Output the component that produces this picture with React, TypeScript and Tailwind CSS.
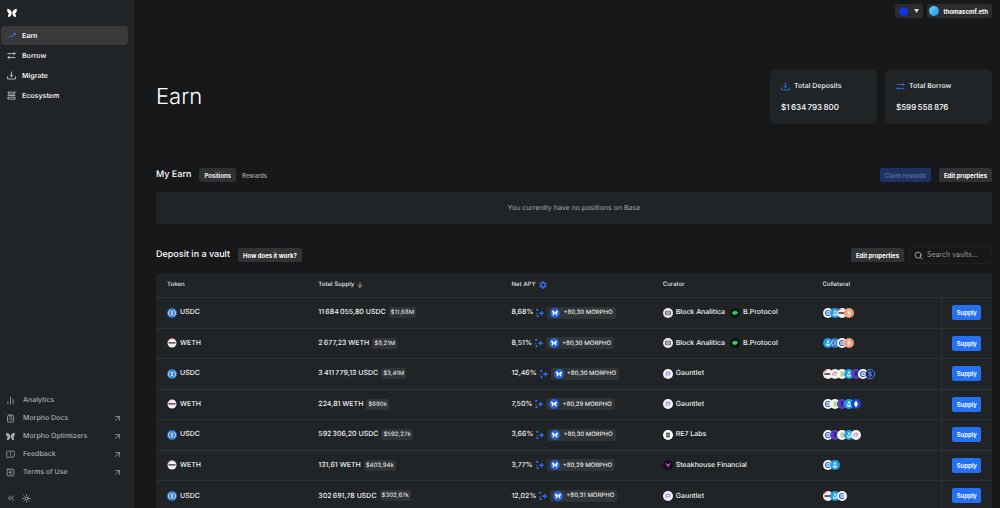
import React from "react";
import {
  ArrowDown,
  ArrowUpRight,
  ChartNoAxesColumn,
  ChevronsLeft,
  ClipboardList,
  MessageSquareWarning,
  Search,
  SquareChartGantt,
  Sun,
} from "lucide-react";

// ============================================================================
// Data
// ============================================================================

type Coin = "cb" | "lido" | "weth" | "btc" | "usdc" | "lime" | "purple" | "pink" | "eth" | "navy";

interface Vault {
  token: "USDC" | "WETH";
  supply: string;
  usd: string;
  apy: string;
  reward: string;
  curators: Curator[];
  collateral: Coin[];
}

type Curator = "Block Analitica" | "B.Protocol" | "Gauntlet" | "RE7 Labs" | "Steakhouse Financial";

const VAULTS: Vault[] = [
  { token: "USDC", supply: "11\u2009684\u2009055,80", usd: "$11,68M", apy: "8,68%", reward: "+80,30", curators: ["Block Analitica", "B.Protocol"], collateral: ["cb", "lido", "weth", "btc"] },
  { token: "WETH", supply: "2\u2009677,23", usd: "$8,21M", apy: "8,51%", reward: "+80,30", curators: ["Block Analitica", "B.Protocol"], collateral: ["lido", "usdc", "cb", "btc"] },
  { token: "USDC", supply: "3\u2009411\u2009779,13", usd: "$3,41M", apy: "12,46%", reward: "+80,30", curators: ["Gauntlet"], collateral: ["weth", "pink", "lime", "lido", "purple", "cb", "navy"] },
  { token: "WETH", supply: "224,81", usd: "$690k", apy: "7,50%", reward: "+80,29", curators: ["Gauntlet"], collateral: ["cb", "lime", "purple", "lido", "eth"] },
  { token: "USDC", supply: "592\u2009306,20", usd: "$592,27k", apy: "3,66%", reward: "+80,30", curators: ["RE7 Labs"], collateral: ["cb", "purple", "lime", "lido", "pink"] },
  { token: "WETH", supply: "131,61", usd: "$403,94k", apy: "3,77%", reward: "+80,29", curators: ["Steakhouse Financial"], collateral: ["cb", "lido"] },
  { token: "USDC", supply: "302\u2009691,78", usd: "$302,67k", apy: "12,02%", reward: "+80,31", curators: ["Gauntlet"], collateral: ["weth", "lido", "cb"] },
];

// ============================================================================
// Icons
// ============================================================================

function Butterfly({ className }: { className?: string }) {
  return (
    <svg viewBox="0 0 20 20" className={className} fill="currentColor" aria-hidden="true">
      <path d="M1 1.500c3.600.2 6.800 2.700 8.300 6.300V12c-1.300 3.600-3.700 6-5.800 6-1.700 0-1.700-2.100-1.300-3.500.4-1.500 1.200-2.400 2.400-2.900C2.100 10.600.7 8 .5 5 .4 3.300.2 1.500 1 1.500Z" />
      <path d="M19 1.500c-3.600.2-6.800 2.700-8.300 6.300V12c1.300 3.600 3.700 6 5.800 6 1.700 0 1.700-2.100 1.300-3.500-.4-1.500-1.200-2.400-2.400-2.900 2.500-1 3.900-3.600 4.100-6.600.1-1.700.3-3.500-.5-3.500Z" />
    </svg>
  );
}

function TrendIcon({ className }: { className?: string }) {
  return (
    <svg viewBox="0 0 16 16" className={className} fill="none" stroke="currentColor" strokeWidth="1.600" aria-hidden="true">
      <path d="m1 12.500 4.500-4.500 3 2.500L14.500 4M10.500 4h4v4" />
    </svg>
  );
}

function SwapIcon({ className }: { className?: string }) {
  return (
    <svg viewBox="0 0 16 16" className={className} fill="none" stroke="currentColor" strokeWidth="1.600" aria-hidden="true">
      <path d="M1 4.500h13.500M11.500 1.500l3 3-3 3M15 11.500H1.500M4.500 8.500l-3 3 3 3" />
    </svg>
  );
}

function TrayIcon({ className }: { className?: string }) {
  return (
    <svg viewBox="0 0 16 16" className={className} fill="none" stroke="currentColor" strokeWidth="1.600" aria-hidden="true">
      <path d="M8 1v9M4.800 7 8 10.200 11.200 7M1 9.500v4.700h14V9.500" />
    </svg>
  );
}

function LayersIcon({ className }: { className?: string }) {
  return (
    <svg viewBox="0 0 16 16" className={className} fill="none" stroke="currentColor" strokeWidth="1.400" aria-hidden="true">
      <path d="M1 2h14M2.500 2v3.500h11V2M1 8h14M1.700 11h12.600v3.500H1.700z" />
    </svg>
  );
}

function HexGear({ className }: { className?: string }) {
  return (
    <svg viewBox="0 0 16 16" className={className} fill="none" stroke="currentColor" aria-hidden="true">
      <circle cx="8" cy="8" r="4.300" strokeWidth="3" />
      <path strokeWidth="3.600" d="M8 .3v3M8 12.700v3M1.400 4.200l2.200 1.200M12.400 10.600l2.200 1.200M1.400 11.800l2.200-1.200M12.400 5.400l2.200-1.200" />
    </svg>
  );
}

function Sparkles({ className }: { className?: string }) {
  return (
    <svg viewBox="0 0 16 16" className={className} fill="currentColor" aria-hidden="true">
      <path d="M10.500 3.500 11.900 6.800 15.800 8.200 11.900 9.600 10.500 13.200 9.100 9.600 5.400 8.200 9.100 6.800Z" />
      <circle cx="3.500" cy="3" r="1.800" />
      <circle cx="2.800" cy="9" r="1" />
      <circle cx="4" cy="13" r="1.800" />
    </svg>
  );
}

function TokenIcon({ token }: { token: Vault["token"] }) {
  if (token === "USDC") {
    return (
      <svg viewBox="0 0 20 20" className="size-[10px] shrink-0" fill="none" aria-hidden="true">
        <circle cx="10" cy="10" r="10" fill="#2f78c8" />
        <path d="M7 4a6.500 6.500 0 0 0 0 12M13 4a6.500 6.500 0 0 1 0 12" stroke="#fff" strokeWidth="1.500" />
        <path d="M12 8c-.4-2-4-2-4 0 0 2.300 4 1.500 4 4 0 2-3.800 2-4 0M10 5v10" stroke="#fff" strokeWidth="1.300" />
      </svg>
    );
  }
  return (
    <svg viewBox="0 0 20 20" className="size-[10px] shrink-0" aria-hidden="true">
      <circle cx="10" cy="10" r="9" fill="#f3eef0" />
      <path d="M3 8.500h14v2.500H3z" fill="#3b2b33" />
      <path d="M1 7A10 10 0 0 1 8 .5v1.200A9 9 0 0 0 2.500 7Z" fill="#d6336c" />
    </svg>
  );
}

const COINS: Record<Coin, React.ReactNode> = {
  cb: (
    <>
      <circle cx="10" cy="10" r="10" fill="#f2f6ff" />
      <path d="M13.500 6.500a5 5 0 1 0 0 7M7 10h6" fill="none" stroke="#2a59b8" strokeWidth="2.200" />
    </>
  ),
  lido: (
    <>
      <circle cx="10" cy="10" r="10" fill="#1f9fe3" />
      <path d="M10 3.500 13 8l-3 2-3-2ZM6 9.800l4 2.500 4-2.500c1.500 3.500-1 6.200-4 6.200s-5.500-2.700-4-6.200Z" fill="#c9ecfc" />
    </>
  ),
  weth: (
    <>
      <circle cx="10" cy="10" r="10" fill="#f3eef0" />
      <path d="M3 8.500h14v3H3z" fill="#3b2b33" />
      <path d="M1 6A10 10 0 0 1 8 .2v2A8 8 0 0 0 3 6Z" fill="#d6336c" />
    </>
  ),
  btc: (
    <>
      <circle cx="10" cy="10" r="10" fill="#f09a78" />
      <path d="M8 5v10M8 5.500h2.500a2.200 2.200 0 0 1 0 4.400H8h3a2.400 2.400 0 0 1 0 4.800H8" fill="none" stroke="#fff1ea" strokeWidth="1.600" />
    </>
  ),
  usdc: (
    <>
      <circle cx="10" cy="10" r="10" fill="#2f78c8" />
      <path d="M7 4a6.500 6.500 0 0 0 0 12M13 4a6.500 6.500 0 0 1 0 12M10 6v8" fill="none" stroke="#fff" strokeWidth="1.500" />
    </>
  ),
  lime: (
    <>
      <circle cx="10" cy="10" r="10" fill="#f4f8ec" />
      <path d="M7 5h3v10H7z" fill="#b9d86a" />
      <path d="M11 5h2v10h-2z" fill="#5fb8a8" />
    </>
  ),
  purple: (
    <>
      <circle cx="10" cy="10" r="10" fill="#5a3fc0" />
      <path d="M7 5.500h6M7 10h6M10 5.500V15" stroke="#2a1a78" strokeWidth="2.400" />
    </>
  ),
  pink: (
    <>
      <circle cx="10" cy="10" r="10" fill="#f5eef2" />
      <path d="M6 13V8l4-2 4 2-4 3v3" fill="none" stroke="#b48a9c" strokeWidth="2" />
    </>
  ),
  eth: (
    <>
      <circle cx="10" cy="10" r="10" fill="#1747c9" />
      <path d="m10 3 4 7-4 7-4-7Z" fill="#fff" />
    </>
  ),
  navy: (
    <>
      <circle cx="10" cy="10" r="9.200" fill="#12275c" stroke="#7fa0e6" strokeWidth="1.500" />
      <path d="M13 7c-1-2-6-1.500-6 .8 0 2.700 6 1.700 6 4.400 0 2.300-5 2.800-6 .6" fill="none" stroke="#9db8f2" strokeWidth="1.800" />
    </>
  ),
};

const CURATORS: Record<Curator, React.ReactNode> = {
  "Block Analitica": (
    <>
      <circle cx="10" cy="10" r="10" fill="#ece8e8" />
      <path d="M5 6.500h10v7H5zM5 10h10" fill="none" stroke="#4a4446" strokeWidth="1.500" />
    </>
  ),
  "B.Protocol": (
    <>
      <circle cx="10" cy="10" r="10" fill="#08140e" />
      <path d="m3 10.500 5.500-5.500 2 2L13.500 5v3H17l-5.500 6-2-1.500L6.500 15v-3.500Z" fill="#2fd06d" />
    </>
  ),
  Gauntlet: (
    <>
      <circle cx="10" cy="10" r="10" fill="#f3f1fb" />
      <path d="M6.500 15v-8.500h7v5h-4" fill="none" stroke="#8b7fd6" strokeWidth="2" />
    </>
  ),
  "RE7 Labs": (
    <>
      <circle cx="10" cy="10" r="10" fill="#fff" />
      <path d="M6 6.500h8M6 10h8M6 13.500h8" stroke="#16181a" strokeWidth="2" />
    </>
  ),
  "Steakhouse Financial": (
    <>
      <circle cx="10" cy="10" r="10" fill="#150a26" />
      <path d="m4 6.500 6 2 6-3-5.500 9.500Z" fill="#e0526a" />
      <path d="m4 6.500 6 2 .5 6.500Z" fill="#7c3fd0" />
    </>
  ),
};

// ============================================================================
// Sidebar
// ============================================================================

const NAV = [
  { label: "Earn", icon: TrendIcon },
  { label: "Borrow", icon: SwapIcon },
  { label: "Migrate", icon: TrayIcon },
  { label: "Ecosystem", icon: LayersIcon },
];

const LINKS = [
  { label: "Analytics", icon: ChartNoAxesColumn, external: false },
  { label: "Morpho Docs", icon: ClipboardList, external: true },
  { label: "Morpho Optimizers", icon: Butterfly, external: true },
  { label: "Feedback", icon: MessageSquareWarning, external: true },
  { label: "Terms of Use", icon: SquareChartGantt, external: true },
];

function Sidebar() {
  return (
    <aside className="flex w-[134px] shrink-0 flex-col bg-[#202427] pb-1">
      <a href="#" aria-label="Home" className="flex h-[26px] items-center pl-[7px]">
        <Butterfly className="size-[10px] text-white" />
      </a>
      <nav className="flex flex-col gap-px pr-1.5 pl-px">
        {NAV.map(({ label, icon: Icon }, i) => (
          <a
            key={label}
            href="#"
            className={
              i === 0
                ? "flex h-[19px] items-center gap-1.5 rounded-[4px] bg-[#39393c] pl-1.5 text-[7px] leading-3 font-semibold text-white"
                : "flex h-[19px] items-center gap-1.5 rounded-[4px] pl-1.5 text-[7px] leading-3 font-semibold text-[#eceded]"
            }
          >
            <Icon className={i === 0 ? "size-[9px] text-[#4a82e8]" : "size-[9px] text-[#c6c8c9]"} />
            {label}
          </a>
        ))}
      </nav>
      <nav className="mt-auto flex flex-col">
        {LINKS.map(({ label, icon: Icon, external }) => (
          <a key={label} href="#" className="flex h-[18px] items-center gap-2 pr-3 pl-1.5 text-[7px] font-medium text-[#a9acae]">
            <Icon className="size-[9px]" />
            {label}
            {external && <ArrowUpRight className="ml-auto size-[9px]" />}
          </a>
        ))}
      </nav>
      <div className="mt-[11px] flex h-3 items-center gap-1.5 pl-1.5 text-[#b9bbbc]">
        <button type="button" aria-label="Collapse sidebar">
          <ChevronsLeft className="size-[10px]" />
        </button>
        <button type="button" aria-label="Toggle theme">
          <Sun className="size-[9px]" />
        </button>
      </div>
    </aside>
  );
}

// ============================================================================
// Main content
// ============================================================================

function StatCard({ icon, label, value }: { icon: React.ReactNode; label: string; value: string }) {
  return (
    <div className="flex h-[55px] w-[107px] flex-col justify-center gap-[9px] rounded-[6px] bg-[#202427] px-[11px]">
      <div className="flex items-center gap-1 text-[7px] leading-3 font-medium text-[#f1f2f2]">
        {icon}
        {label}
      </div>
      <div className="text-[8px] leading-3 font-medium text-white">{value}</div>
    </div>
  );
}

function SmallButton({ children }: { children: React.ReactNode }) {
  return (
    <button type="button" className="h-[14px] rounded-[2px] bg-[#313335] px-[5px] text-[6px] font-bold text-white">
      {children}
    </button>
  );
}

function VaultRow({ vault }: { vault: Vault }) {
  return (
    <tr className="h-[30px] border-t border-[#2d3134] odd:h-[31px]">
      <td className="pl-[11px]">
        <div className="flex items-center gap-[3px]">
          <TokenIcon token={vault.token} />
          {vault.token}
        </div>
      </td>
      <td className="pl-[11px]">
        <div className="flex items-center gap-[3px]">
          {vault.supply} {vault.token}
          <span className="rounded-[2px] bg-[#303436] px-0.5 text-[6px] leading-[11px] text-[#dcddde]">{vault.usd}</span>
        </div>
      </td>
      <td className="pl-[11px]">
        <div className="flex items-center gap-0.5">
          {vault.apy}
          <Sparkles className="size-[10px] text-[#2f6fea]" />
          <span className="flex h-3 items-center gap-[3px] rounded-[2px] bg-[#303436] px-[3px] text-[6px] text-[#e8e9ea]">
            <span className="flex size-[10px] items-center justify-center rounded-full bg-[#2463dc]">
              <Butterfly className="size-[6px] text-white" />
            </span>
            {vault.reward} MORPHO
          </span>
        </div>
      </td>
      <td className="pl-[11px]">
        <div className="flex items-center gap-[5px]">
          {vault.curators.map((name) => (
            <span key={name} className="flex items-center gap-[3px]">
              <svg viewBox="0 0 20 20" className="size-[10px] shrink-0" aria-hidden="true">
                {CURATORS[name]}
              </svg>
              {name}
            </span>
          ))}
        </div>
      </td>
      <td className="pl-3">
        <div className="flex items-center -space-x-[3px]">
          {vault.collateral.map((coin) => (
            <svg key={coin} viewBox="0 0 20 20" className="size-[10px]" aria-hidden="true">
              {COINS[coin]}
            </svg>
          ))}
        </div>
      </td>
      <td className="border-l border-[#2d3134] text-center">
        <button type="button" className="h-[15px] w-[29px] rounded-[2px] bg-[#2470f3] text-[6px] font-semibold text-white">
          Supply
        </button>
      </td>
    </tr>
  );
}

export default function App() {
  return (
    <div className="flex h-screen bg-[#17181a] font-['Inter',sans-serif] text-white [text-rendering:geometricPrecision]">
      <Sidebar />
      <main className="min-w-0 flex-1 overflow-y-auto pr-2 pl-[22px] [scrollbar-width:none]">
        <header className="flex justify-end gap-1 pt-1">
          <button type="button" aria-label="Select network" className="flex h-[14px] items-center gap-1.5 rounded-[3px] bg-[#2a2c2e] px-1">
            <span className="size-[9px] rounded-full bg-[#1233dd]" />
            <svg viewBox="0 0 10 8" className="h-1 w-[5px]" fill="#d8d8d8" aria-hidden="true">
              <path d="M0 0h10L5 8Z" />
            </svg>
          </button>
          <button type="button" className="flex h-[14px] items-center gap-1 rounded-[3px] bg-[#2a2c2e] px-0.5 pr-1 text-[6px] font-bold">
            <span className="size-[10px] rounded-full bg-linear-to-br from-[#62dcf5] to-[#1e8be0]" />
            thomascmf.eth
          </button>
        </header>

        <section className="mt-[51px] flex items-center justify-between">
          <h1 className="text-[22px] leading-6 font-light">Earn</h1>
          <div className="flex gap-2">
            <StatCard icon={<TrayIcon className="size-[9px] text-[#2f6fea]" />} label="Total Deposits" value={"$1\u2009634\u2009793\u2009800"} />
            <StatCard icon={<SwapIcon className="size-[9px] text-[#2f6fea]" />} label="Total Borrow" value={"$599\u2009558\u2009876"} />
          </div>
        </section>

        <section className="mt-11">
          <div className="flex h-[14px] items-center">
            <h2 className="text-[9px] font-medium">My Earn</h2>
            <div className="ml-2 flex text-[6px] font-semibold">
              <button type="button" className="h-[14px] rounded-[3px] bg-[#2f3133] px-[5px] text-white">
                Positions
              </button>
              <button type="button" className="h-[14px] px-1.5 text-[#999b9d]">
                Rewards
              </button>
            </div>
            <div className="ml-auto flex gap-2">
              <button type="button" disabled className="h-[14px] rounded-[2px] bg-[#1c3261] px-[5px] text-[6px] font-semibold text-[#5a6d97]">
                Claim rewards
              </button>
              <SmallButton>Edit properties</SmallButton>
            </div>
          </div>
          <div className="mt-[10px] flex h-8 items-center justify-center rounded-[3px] bg-[#202427] text-[7px] text-[#a4a7a9]">
            You currently have no positions on Base
          </div>
        </section>

        <section className="mt-[22px]">
          <div className="flex h-[18px] items-center gap-2">
            <h2 className="text-[9px] font-medium">Deposit in a vault</h2>
            <SmallButton>How does it work?</SmallButton>
            <div className="ml-auto flex items-center gap-[5px]">
              <SmallButton>Edit properties</SmallButton>
              <label className="flex h-[18px] w-[83px] items-center gap-1 rounded-[3px] border border-[#1e2022] pl-1">
                <Search className="size-[9px] shrink-0 text-[#c4c5c6]" />
                <input
                  type="text"
                  aria-label="Search vaults"
                  placeholder="Search vaults..."
                  className="w-full min-w-0 bg-transparent text-[7px] outline-none placeholder:text-[#96989a]"
                />
              </label>
            </div>
          </div>

          <div className="mt-[9px] overflow-hidden rounded-t-[4px] bg-[#202427]">
            <table className="w-full table-fixed text-left text-[7px] font-medium text-[#f1f2f2]">
              <thead>
                <tr className="h-6 text-[6px] text-[#d2d4d5]">
                  <th className="w-[18.1%] pl-[11px] font-semibold">Token</th>
                  <th className="w-[23.1%] pl-[11px] font-semibold">
                    <span className="flex items-center gap-0.5">
                      Total Supply <ArrowDown className="size-2" />
                    </span>
                  </th>
                  <th className="w-[18.1%] pl-[11px] font-semibold">
                    <span className="flex items-center gap-[3px]">
                      Net APY <HexGear className="size-2 text-[#2f6fea]" />
                    </span>
                  </th>
                  <th className="w-[19.1%] pl-[11px] font-semibold">Curator</th>
                  <th className="pl-[11px] font-semibold">Collateral</th>
                  <th className="w-[51px]" aria-label="Actions" />
                </tr>
              </thead>
              <tbody>
                {VAULTS.map((vault, i) => (
                  <VaultRow key={i} vault={vault} />
                ))}
              </tbody>
            </table>
          </div>
        </section>
      </main>
    </div>
  );
}
